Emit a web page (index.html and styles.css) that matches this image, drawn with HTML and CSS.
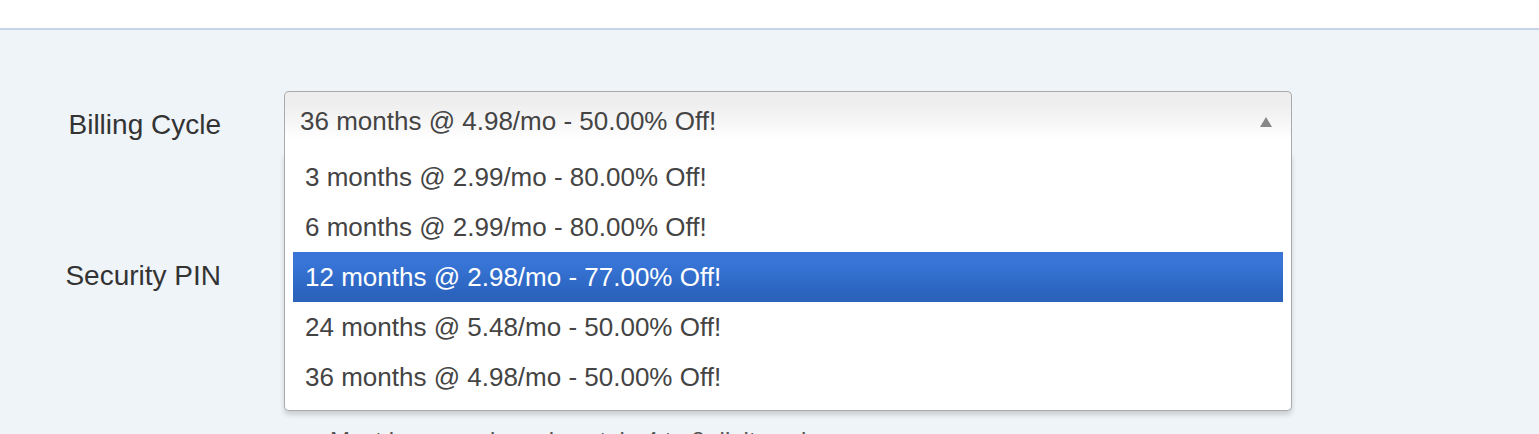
FILE: index.html
```html
<!DOCTYPE html>
<html lang="en">
<head>
    <meta charset="UTF-8">
    <meta name="viewport" content="width=device-width, initial-scale=1.0">
    <title>Order Configuration</title>
    <link rel="stylesheet" href="styles.css">
</head>
<body>
    <div class="topbar"></div>

    <div class="config">
        <div class="form-row">
            <label class="form-label">Billing Cycle</label>
            <div class="chosen-container">
                <a class="chosen-single">
                    <span>36 months @ 4.98/mo - 50.00% Off!</span>
                    <b class="chosen-arrow"></b>
                </a>
                <div class="chosen-drop">
                    <ul class="chosen-results">
                        <li class="result">3 months @ 2.99/mo - 80.00% Off!</li>
                        <li class="result">6 months @ 2.99/mo - 80.00% Off!</li>
                        <li class="result highlighted">12 months @ 2.98/mo - 77.00% Off!</li>
                        <li class="result">24 months @ 5.48/mo - 50.00% Off!</li>
                        <li class="result">36 months @ 4.98/mo - 50.00% Off!</li>
                    </ul>
                </div>
            </div>
        </div>

        <div class="form-row second">
            <label class="form-label">Security PIN</label>
            <div class="field">
                <input class="pin-input" type="password">
                <p class="help">Must be numeric and contain 4 to 8 digits only</p>
            </div>
        </div>
    </div>
</body>
</html>
```

FILE: styles.css
```css
body {
    margin: 0;
    font-family: "Liberation Sans", Arial, sans-serif;
    background-color: #eff4f9;
    color: #333;
}
.topbar {
    height: 28px;
    background-color: #fff;
    border-bottom: 2px solid #c6d3e6;
}
.config {
    padding-top: 61px;
}
.form-row {
    display: flex;
    align-items: flex-start;
    gap: 63px;
}
.form-row.second {
    margin-top: 90px;
}
.form-label {
    width: 222px;
    text-align: right;
    font-size: 28px;
    line-height: 40px;
    margin-top: 14px;
    margin-left: -1px;
    color: #333;
}
.chosen-container {
    position: relative;
    width: 1008px;
    font-size: 26px;
    z-index: 10;
}
.chosen-single {
    display: flex;
    justify-content: space-between;
    align-items: center;
    box-sizing: border-box;
    height: 61px;
    padding: 0 19px 3px 15px;
    border: 1px solid #aaa;
    border-bottom: 0;
    border-radius: 5px 5px 0 0;
    background: linear-gradient(#eee 20%, #fff 80%);
    color: #444;
    line-height: 58px;
}
.chosen-arrow {
    width: 0;
    height: 0;
    border-left: 6px solid transparent;
    border-right: 6px solid transparent;
    border-bottom: 10px solid #888;
    margin-top: 2px;
}
.chosen-drop {
    position: absolute;
    top: 100%;
    left: 0;
    right: 0;
    background-color: #fff;
    border: 1px solid #aaa;
    border-top: 0;
    border-radius: 0 0 5px 5px;
    box-shadow: 0 4px 5px rgba(0, 0, 0, 0.15);
}
.chosen-results {
    list-style: none;
    margin: 0 8px 8px 0;
    padding: 0 0 0 8px;
}
.result {
    height: 50px;
    line-height: 50px;
    padding: 0 12px;
    color: #444;
}
.result.highlighted {
    background: linear-gradient(#3875d7 20%, #2a62bc 90%);
    color: #fff;
}
.field {
    width: 1008px;
}
.pin-input {
    display: block;
    box-sizing: border-box;
    width: 400px;
    height: 60px;
    border: 1px solid #ccc;
    border-radius: 4px;
}
.help {
    margin: 121px 0 0 46px;
    font-size: 24px;
    line-height: 36px;
    color: #555;
}
```
